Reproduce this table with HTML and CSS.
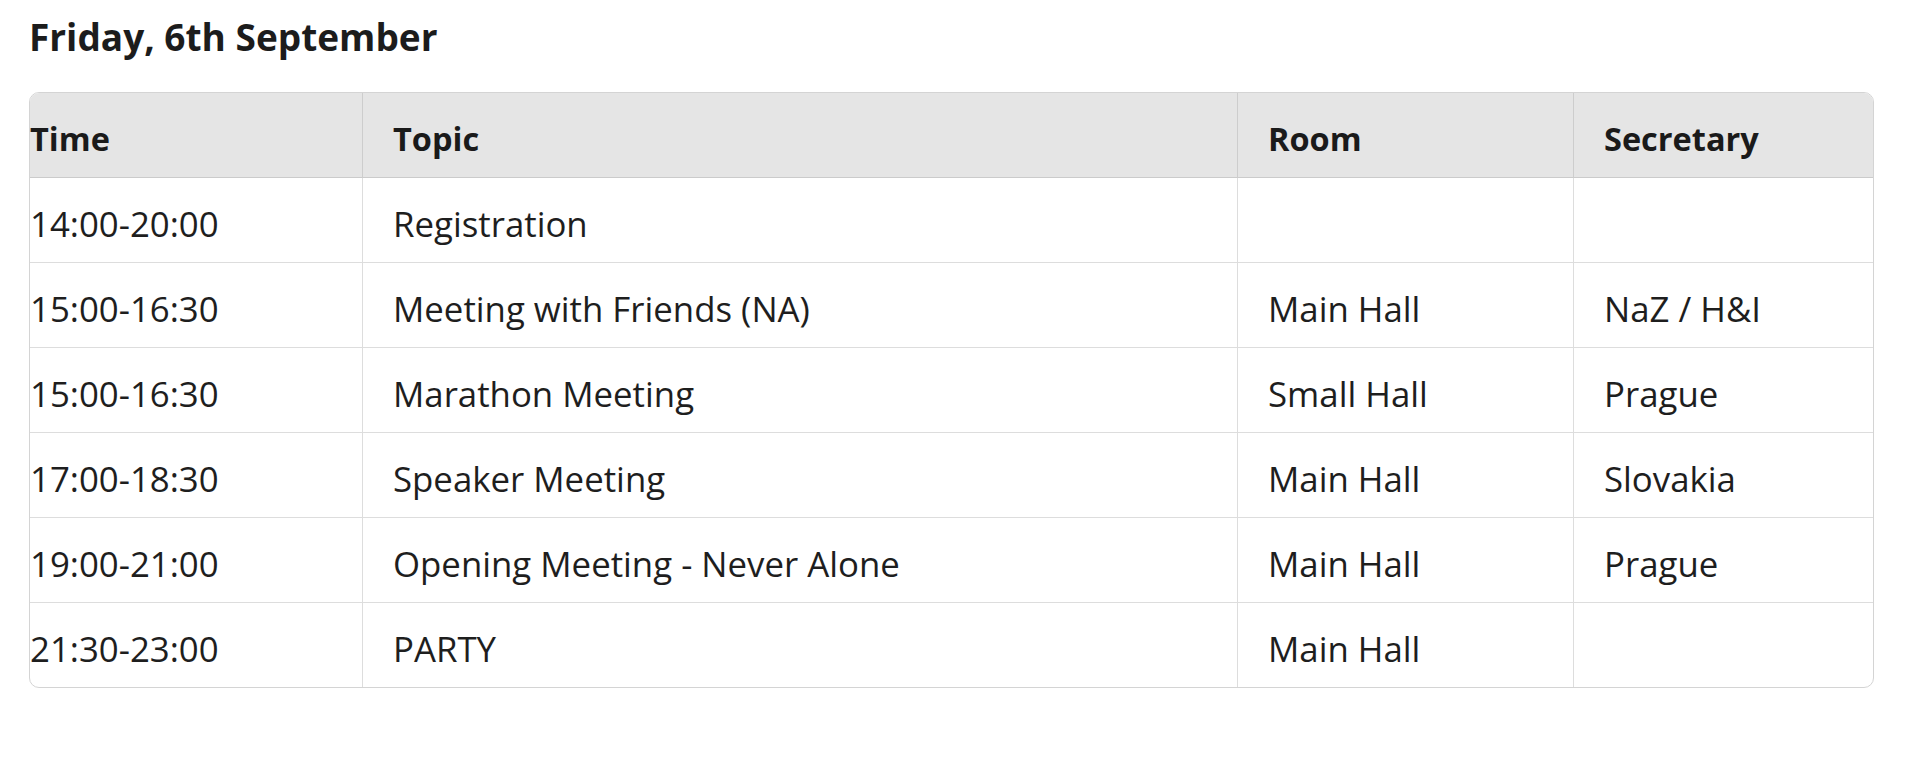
FILE: index.html
```html
<!DOCTYPE html>
<html lang="en">
<head>
<meta charset="utf-8">
<title>Programme</title>
<link rel="stylesheet" href="styles.css">
</head>
<body>
<main class="page">
  <h1 class="day-title">Friday, 6th September</h1>
  <div class="schedule-wrap">
    <table class="schedule">
      <thead>
        <tr>
          <th class="col-time">Time</th>
          <th class="col-topic">Topic</th>
          <th class="col-room">Room</th>
          <th class="col-sec">Secretary</th>
        </tr>
      </thead>
      <tbody>
        <tr><td>14:00-20:00</td><td>Registration</td><td></td><td></td></tr>
        <tr><td>15:00-16:30</td><td>Meeting with Friends (NA)</td><td>Main Hall</td><td>NaZ / H&amp;I</td></tr>
        <tr><td>15:00-16:30</td><td>Marathon Meeting</td><td>Small Hall</td><td>Prague</td></tr>
        <tr><td>17:00-18:30</td><td>Speaker Meeting</td><td>Main Hall</td><td>Slovakia</td></tr>
        <tr><td>19:00-21:00</td><td>Opening Meeting - Never Alone</td><td>Main Hall</td><td>Prague</td></tr>
        <tr><td>21:30-23:00</td><td>PARTY</td><td>Main Hall</td><td></td></tr>
      </tbody>
    </table>
  </div>
</main>
</body>
</html>
```

FILE: styles.css
```css
html, body {
  margin: 0;
  padding: 0;
  background: #ffffff;
}

body {
  font-family: "Open Sans", "Noto Sans", sans-serif;
  color: #1f1f1f;
}

.page {
  padding: 14px 44px 0 29px;
}

.day-title {
  margin: 0 0 32px 0;
  font-size: 37px;
  line-height: 46px;
  font-weight: 700;
  color: #1c1c1c;
}

.schedule-wrap {
  border: 1px solid #d4d4d4;
  border-radius: 10px;
  overflow: hidden;
}

.schedule {
  width: 100%;
  border-collapse: separate;
  border-spacing: 0;
  table-layout: fixed;
}

.schedule th,
.schedule td {
  box-sizing: border-box;
  height: 85px;
  padding: 22px 0 15px 30px;
  line-height: 47px;
  text-align: left;
  vertical-align: top;
  white-space: nowrap;
  border-right: 1px solid #dddddd;
  border-bottom: 1px solid #dddddd;
}

.schedule th:last-child,
.schedule td:last-child {
  border-right: none;
}

.schedule tbody tr:last-child td {
  border-bottom: none;
  height: 84px;
}

.schedule th:first-child,
.schedule td:first-child {
  padding-left: 0;
}

.schedule th {
  background: #e5e5e5;
  font-size: 32.5px;
  font-weight: 700;
  color: #1a1a1a;
  border-right-color: #cdcdcd;
  border-bottom-color: #cbcbcb;
}

.schedule td {
  font-size: 34.8px;
  font-weight: 400;
  color: #1e1e1e;
}

.col-time { width: 333px; }
.col-topic { width: 875px; }
.col-room { width: 336px; }
.col-sec { width: auto; }
```
